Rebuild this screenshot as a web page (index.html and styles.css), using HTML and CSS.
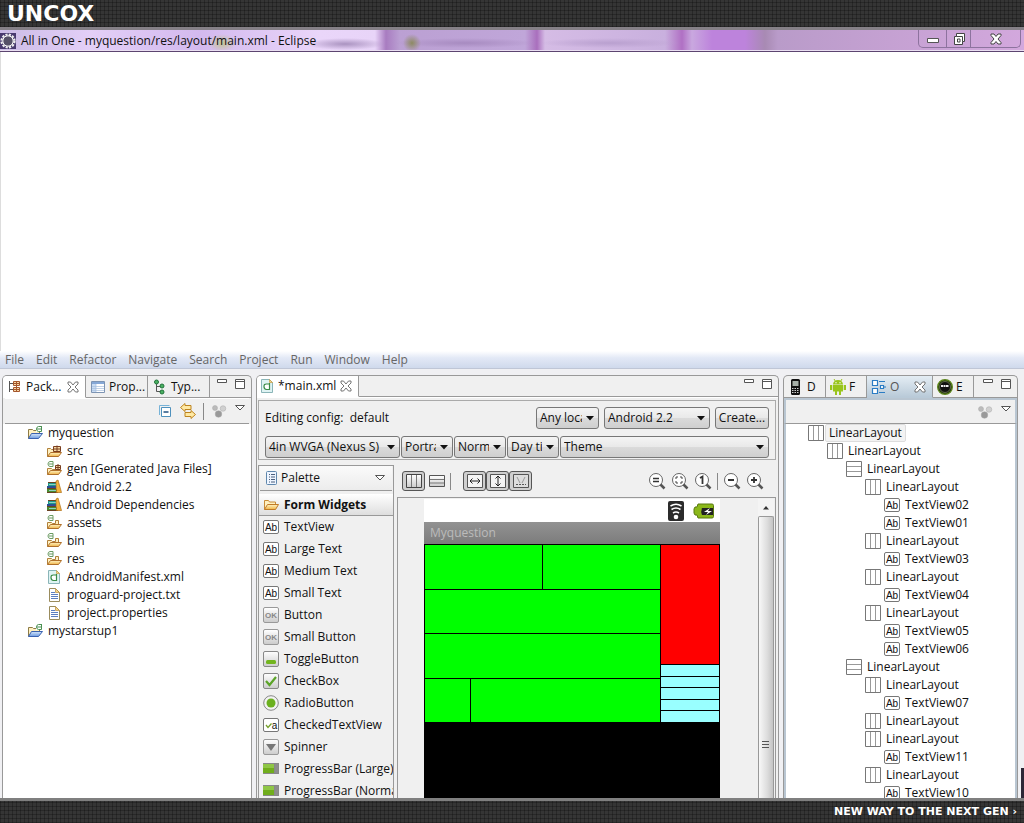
FILE: index.html
```html
<!DOCTYPE html>
<html lang="en">
<head>
    <meta charset="UTF-8">
    <meta name="viewport" content="width=device-width, initial-scale=1.0">
    <title>All in One - Eclipse</title>
    <link rel="stylesheet" href="styles.css">
</head>
<body>
    <!-- icon sprite -->
    <svg class="sprite" aria-hidden="true">
        <defs>
            <linearGradient id="gold" x1="0" y1="0" x2="0" y2="1"><stop offset="0" stop-color="#fff3c4"/><stop offset="1" stop-color="#f0b548"/></linearGradient>
            <linearGradient id="blue" x1="0" y1="0" x2="0" y2="1"><stop offset="0" stop-color="#d5e6fb"/><stop offset="1" stop-color="#6d9be0"/></linearGradient>
            <linearGradient id="grey" x1="0" y1="0" x2="0" y2="1"><stop offset="0" stop-color="#fff"/><stop offset="1" stop-color="#ccc"/></linearGradient>
        </defs>
        <symbol id="project" viewBox="0 0 16 16">
            <path d="M1.500 13.500v-9h4l1 1h6v4" fill="#fff0c0" stroke="#8d7b45"/>
            <path d="M1.500 13.500l3-5h11l-4 5z" fill="url(#blue)" stroke="#3a62b0"/>
            <path d="M9 1h6v6h-6z" fill="#fff"/><path d="M14.500 1v5.500h-3q-2-.3-2-2.500t2-2.500h3M10 4h4" fill="none" stroke="#4a9152"/>
        </symbol>
        <symbol id="folder" viewBox="0 0 16 16">
            <path d="M1.500 13.500v-6h4l1 1h3v-3h3v4" fill="#fff0c0" stroke="#b0803a"/>
            <path d="M1.500 13.500l3-4h11l-3 4z" fill="url(#gold)" stroke="#b0702a"/>
            <path d="M7 .5v5h-3q-2-.3-2-2.500t2-2.500zM3 3h4" fill="#fff" stroke="#6a9a62"/>
        </symbol>
        <symbol id="src" viewBox="0 0 16 16">
            <path d="M1.500 13.500v-8h3l1 1h4v3" fill="#fff0c0" stroke="#b0803a"/>
            <path d="M1.500 13.500l3-4h11l-3 4z" fill="url(#gold)" stroke="#b0702a"/>
            <path d="M7.500 3.500h7v5h-7zM11 2.500v6M7 6h8" fill="#f5d9a5" stroke="#7b3f20"/>
        </symbol>
        <symbol id="gen" viewBox="0 0 16 16">
            <path d="M1.500 13.500v-6h4l1 1h3v2" fill="#fff0c0" stroke="#b0803a"/>
            <path d="M1.500 13.500l3-4h11l-3 4z" fill="url(#gold)" stroke="#b0702a"/>
            <path d="M9.500 4.500h5v4h-5zM12 3v6M9 6.500h6" fill="#f5d9a5" stroke="#7b3f20"/>
            <path d="M7 .5v5h-3q-2-.3-2-2.500t2-2.500zM3 3h4" fill="#fff" stroke="#6a9a62"/>
        </symbol>
        <symbol id="books" viewBox="0 0 16 16">
            <path d="M2 4h8v3h-8z" fill="#1d9a8c"/><path d="M1 7h9v3h-9z" fill="#2c4f95"/><path d="M1 10h10v3h-10z" fill="#4a8a2d"/>
            <path d="M3 5.500h7M3 11.500h7" stroke="#8fd0c4"/><path d="M1 13.500h11M1 9.500h9M2 3.500h8" stroke="#6b4222"/>
            <path d="M10 2l2-1 3.500 12.500h-5z" fill="#f2b23c" stroke="#ad6d16" stroke-width=".7"/>
        </symbol>
        <symbol id="afile" viewBox="0 0 16 16">
            <path d="M2.500 1.500h8l3 3v10h-11z" fill="#dff3f3" stroke="#8ab5b8"/><path d="M10.500 1.500v3h3z" fill="#f5d78b" stroke="#c49a3f" stroke-width=".7"/>
            <path d="M10.500 5v6.500h-3q-2.500-.3-2.500-3t2.500-2.500h3" fill="#fff" stroke="#3a8b46" stroke-width="1.200"/>
        </symbol>
        <symbol id="txt" viewBox="0 0 16 16">
            <path d="M3.500 1.500h6l4 4v9h-10z" fill="#fff" stroke="#9a8c5d"/><path d="M9.500 1.500v4h4z" fill="#f5d78b" stroke="#b48a3f" stroke-width=".7"/>
            <path d="M5 5.500h4M5 7.500h7M5 9.500h7M5 11.500h7" stroke="#5d7fc0"/>
        </symbol>
        <symbol id="pkg" viewBox="0 0 16 16">
            <path d="M2.500 2v11M3 4.500h3M3 10.500h3" stroke="#555" fill="none"/>
            <path d="M6.500 2.500h6v4h-6zM6.500 8.500h6v4h-6zM9.500 2v11M6 4.500h7M6 10.500h7" fill="#f6d9a8" stroke="#a5562c"/>
        </symbol>
        <symbol id="props" viewBox="0 0 16 16">
            <path d="M1.500 2.500h13v11h-13z" fill="#fff" stroke="#7d94b3"/><path d="M2 3h12v2h-12z" fill="#86a8d6"/><path d="M2 5h4v8h-4z" fill="#c9dcf3"/>
            <path d="M2 7.500h12M2 9.500h12M2 11.500h12M6 5v8" stroke="#a6bfdd" stroke-width=".7"/>
        </symbol>
        <symbol id="types" viewBox="0 0 16 16">
            <path d="M4.500 3v9.500h5M5 7.500h5" fill="none" stroke="#555"/><g fill="#4ab061" stroke="#20733a"><circle cx="4.500" cy="3" r="2"/><circle cx="10" cy="7" r="2"/><circle cx="10" cy="13" r="2"/></g>
        </symbol>
        <symbol id="close" viewBox="0 0 12 12">
            <path d="M1 1h2.500l2.500 3 2.500-3h2.500v2l-3 3 3 3v2h-2.500l-2.500-3-2.500 3h-2.500v-2l3-3-3-3z" fill="#fff" stroke="#666" stroke-width=".9"/>
        </symbol>
        <symbol id="collapse" viewBox="0 0 16 16"><path d="M2.500 12v-9.500h10" fill="none" stroke="#77b3d8"/><path d="M4.500 4.500h9v9h-9z" fill="#fff" stroke="#4e91bd"/><path d="M6.500 9h5" stroke="#205080" stroke-width="1.500"/></symbol>
        <symbol id="link" viewBox="0 0 16 16"><path d="M5 .5v2h6v4h-6v2l-4.500-4zM11 7.500v2h-6v4h6v2l4.500-4z" fill="#ffe9a3" stroke="#bd8420"/></symbol>
        <symbol id="focus" viewBox="0 0 16 16"><g stroke="#aaa" stroke-width=".5"><circle cx="4" cy="5" r="2.500" fill="#bbb"/><circle cx="12" cy="5.500" r="2.800" fill="#d0d0d0"/><circle cx="7.500" cy="11" r="3.300" fill="#999"/></g></symbol>
        <symbol id="tri" viewBox="0 0 12 12"><path d="M1.500 3.500h9l-4.500 4.500z" fill="#fff" stroke="#555"/></symbol>
        <symbol id="min" viewBox="0 0 12 12"><path d="M1.500 1.500h9v3h-9z" fill="#fff" stroke="#555"/></symbol>
        <symbol id="max" viewBox="0 0 12 12"><path d="M1.500 1.500h9v9h-9zM1.500 3.500h9" fill="#fff" stroke="#555"/></symbol>
        <symbol id="cols" viewBox="0 0 16 16"><path d="M.5.5h15v15h-15z" fill="#fff" stroke="#777"/><path d="M5.500 1v14M10.500 1v14" stroke="#999"/></symbol>
        <symbol id="rows" viewBox="0 0 16 16"><path d="M.5.5h15v15h-15z" fill="#fff" stroke="#777"/><path d="M1 5.500h14M1 10.500h14" stroke="#999"/></symbol>
        <symbol id="tcols" viewBox="0 0 16 14"><path d="M.5.5h15v13h-15z" fill="url(#grey)" stroke="#444"/><path d="M5.500 1v12M10.500 1v12" stroke="#777"/></symbol>
        <symbol id="trows" viewBox="0 0 16 14"><path d="M.5 1.500h15v11h-15z" fill="url(#grey)" stroke="#555"/><path d="M1 5.500h14M1 9h14" stroke="#777"/></symbol>
        <symbol id="toggle" viewBox="0 0 16 16"><rect x=".5" y=".5" width="15" height="15" rx="1.500" fill="url(#grey)" stroke="#888"/><rect x="3" y="9" width="10" height="4" rx="1.500" fill="#72b51e"/></symbol>
        <symbol id="check" viewBox="0 0 16 16"><rect x=".5" y=".5" width="15" height="15" rx="1.500" fill="url(#grey)" stroke="#888"/><path d="M3 8l3.500 4 6.500-8" fill="none" stroke="#5ba428" stroke-width="2.200"/></symbol>
        <symbol id="radio" viewBox="0 0 16 16"><circle cx="8" cy="8" r="7.300" fill="#f2f2f2" stroke="#888"/><circle cx="8" cy="8" r="4.500" fill="#6bb01f"/></symbol>
        <symbol id="spin" viewBox="0 0 16 16"><rect x=".5" y=".5" width="15" height="15" rx="1.500" fill="url(#grey)" stroke="#999"/><path d="M3 5h10l-5 7z" fill="#777"/></symbol>
        <symbol id="bar" viewBox="0 0 16 16"><path d="M0 2h16v11h-16z" fill="#888"/><path d="M0 3h11v9h-11z" fill="#70ad1c"/><path d="M0 3h11v4h-11z" fill="#8fc646"/><path d="M12 3h3v9h-3z" fill="#8d8d8d"/></symbol>
        <symbol id="palette" viewBox="0 0 16 16"><rect x="3.500" y="1.500" width="10" height="13" rx="1" fill="#eef5ff" stroke="#5f87ad"/><path d="M6 4.500h1M8 4.500h4M6 7h1M8 7h4M6 9.500h1M8 9.500h4M6 12h1M8 12h4" stroke="#4b5e7c"/></symbol>
        <symbol id="open" viewBox="0 0 16 16"><path d="M1.500 12.500v-9h4l1 1.500h6v3" fill="#fff0c0" stroke="#c88b38"/><path d="M1.500 12.500l3-5h11l-3 5z" fill="url(#gold)" stroke="#c07a28"/></symbol>
        <symbol id="phone" viewBox="0 0 16 16"><rect x="3" y="0" width="9" height="16" rx="1.500" fill="#111"/><path d="M4.500 2h6v5h-6z" fill="#a7b0a8"/><path d="M4 9.500h7M4 11.500h7M4 13.500h7" stroke="#ccc" stroke-dasharray="1.500 1"/></symbol>
        <symbol id="droid" viewBox="0 0 16 16"><path d="M3 5.500a5 4.500 0 0 1 10 0zM3 6h10v6.500h-10zM0 6h2.300v5h-2.300zM13.700 6h2.300v5h-2.300zM5 12h2v4h-2zM9 12h2v4h-2z" fill="#99c51d"/><path d="M4 0l1.500 2.500M12 0l-1.500 2.500" stroke="#99c51d"/><circle cx="6" cy="3.700" r=".7" fill="#fff"/><circle cx="10" cy="3.700" r=".7" fill="#fff"/></symbol>
        <symbol id="outline" viewBox="0 0 16 16"><path d="M1.500 1.500h5v5h-5zM1.500 9.500h5v5h-5zM9.500 6.500h3v3h-3z" fill="#fff" stroke="#2b7cc4" stroke-width="1.200"/><path d="M8 2.500h6M13 8h2M8 13.500h6" stroke="#2b7cc4" stroke-width="1.200"/></symbol>
        <symbol id="emu" viewBox="0 0 16 16"><circle cx="8" cy="8" r="7.300" fill="#202714" stroke="#5c861c" stroke-width="1.400"/><circle cx="8" cy="8" r="5.500" fill="#111" stroke="#5c6b44"/><path d="M4 7h8" stroke="#eee" stroke-width="2" stroke-dasharray="2 .5"/></symbol>
        <symbol id="eclipse" viewBox="0 0 16 16"><path d="M0 0h16v16h-16z" fill="#48396e"/><circle cx="8" cy="8" r="6.500" fill="none" stroke="#eee" stroke-width="2.200" stroke-dasharray="2.200 1.200"/><circle cx="8" cy="8" r="5.200" fill="#555067" stroke="#fff"/></symbol>
        <symbol id="lens" viewBox="0 0 18 18"><circle cx="8" cy="8" r="6.500" fill="#fff" stroke="#666"/><path d="M12.500 12.500l4 4" stroke="#555" stroke-width="2.500"/></symbol>
    </svg>

    <header class="site-header"><span class="logo">UNCOX</span></header>

    <div class="title-bar">
        <svg class="icon"><use href="#eclipse"/></svg>
        <span class="window-title">All in One - myquestion/res/layout/main.xml - Eclipse</span>
        <div class="window-buttons">
            <button aria-label="Minimize"><svg width="14" height="12"><path d="M1.500 5.500h11v4h-11z" fill="#fff" stroke="#555"/></svg></button>
            <button aria-label="Restore"><svg width="14" height="14"><path d="M4.500 1.500h8v8h-2v3h-8v-8h2z" fill="#fff" stroke="#444"/><path d="M4.500 4.500h6v5M5.500 7h2.500v3h-2.500z" fill="none" stroke="#444"/></svg></button>
            <button aria-label="Close" class="close-window"><svg width="14" height="12"><path d="M2 1h3l2 2.500 2-2.500h3v1.500l-3 3.500 3 3.500v1.500h-3l-2-2.500-2 2.500h-3v-1.500l3-3.500-3-3.500z" fill="#fff" stroke="#444"/></svg></button>
        </div>
    </div>

    <div class="blank-area"></div>

    <nav class="menu-bar">
        <a href="#">File</a><a href="#">Edit</a><a href="#">Refactor</a><a href="#">Navigate</a><a href="#">Search</a><a href="#">Project</a><a href="#">Run</a><a href="#">Window</a><a href="#">Help</a>
    </nav>

    <main class="workspace">
        <section class="panel">
            <div class="tabs">
                <button class="tab tab-wide active"><svg class="icon"><use href="#pkg"/></svg>Pack...<svg class="close"><use href="#close"/></svg></button>
                <button class="tab tab-mid"><svg class="icon"><use href="#props"/></svg>Prop...</button>
                <button class="tab tab-mid"><svg class="icon"><use href="#types"/></svg>Typ...</button>
                <span class="tab-tools"><svg class="small"><use href="#min"/></svg><svg class="small"><use href="#max"/></svg></span>
            </div>
            <div class="panel-toolbar">
                <svg class="icon"><use href="#collapse"/></svg>
                <svg class="icon"><use href="#link"/></svg>
                <i class="separator"></i>
                <svg class="icon"><use href="#focus"/></svg>
                <svg class="small"><use href="#tri"/></svg>
            </div>
            <ul class="tree files" id="files"></ul>
        </section>

        <section class="panel editor">
            <div class="tabs">
                <button class="tab tab-editor active"><svg class="icon"><use href="#afile"/></svg>*main.xml<svg class="close"><use href="#close"/></svg></button>
                <span class="tab-tools"><svg class="small"><use href="#min"/></svg><svg class="small"><use href="#max"/></svg></span>
            </div>
            <div class="config">
                <div class="config-row">
                    <span class="config-name">Editing config:&nbsp; default</span>
                    <select aria-label="Locale" class="w-locale"><option>Any locale</option></select>
                    <select aria-label="Target" class="w-target"><option>Android 2.2</option></select>
                    <button class="create">Create...</button>
                </div>
                <div class="config-row tight">
                    <select aria-label="Device" class="w-device"><option>4in WVGA (Nexus S)</option></select>
                    <select aria-label="Orientation" class="w-short"><option>Portrait</option></select>
                    <select aria-label="Dock mode" class="w-short"><option>Normal</option></select>
                    <select aria-label="Night mode" class="w-short"><option>Day time</option></select>
                    <select aria-label="Theme" class="w-theme"><option>Theme</option></select>
                </div>
            </div>
            <div class="designer">
                <aside class="palette">
                    <div class="palette-title"><svg class="icon"><use href="#palette"/></svg>Palette<svg class="small"><use href="#tri"/></svg></div>
                    <div class="palette-group"><svg class="icon"><use href="#open"/></svg>Form Widgets</div>
                    <ul id="widgets"></ul>
                </aside>
                <div class="stage">
                    <div class="stage-toolbar">
                        <button class="tool pressed" aria-label="Horizontal"><svg width="16" height="14"><use href="#tcols"/></svg></button>
                        <button class="tool flat" aria-label="Vertical"><svg width="16" height="14"><use href="#trows"/></svg></button>
                        <i class="separator"></i>
                        <button class="tool pressed push" aria-label="Toggle width"><svg width="16" height="14"><path d="M.5.5h15v13h-15z" fill="#f4f4f4" stroke="#555"/><path d="M3 7h10M5.500 4.500l-2.500 2.500 2.500 2.500M10.500 4.500l2.500 2.500-2.500 2.500" fill="none" stroke="#222"/></svg></button>
                        <button class="tool pressed" aria-label="Toggle height"><svg width="16" height="14"><path d="M.5.5h15v13h-15z" fill="#f4f4f4" stroke="#555"/><path d="M8 2v10M5.500 4.500l2.500-2.500 2.500 2.500M5.500 9.500l2.500 2.500 2.500-2.500" fill="none" stroke="#222"/></svg></button>
                        <button class="tool pressed" aria-label="Show margins"><svg width="16" height="14"><path d="M.5.5h15v13h-15z" fill="#ddd" stroke="#555"/><path d="M4 3l3 6M12 3l-3 6" stroke="#999"/><path d="M3 10.500h10" stroke="#555" stroke-dasharray="2 1"/></svg></button>
                        <div class="zoom">
                            <button aria-label="Emulate size"><svg width="18" height="18"><use href="#lens"/><path d="M5 6.500h6M5 9.500h6" stroke="#333" stroke-width="1.500"/></svg></button>
                            <button aria-label="Zoom to fit"><svg width="18" height="18"><use href="#lens"/><path d="M5 7v-2h2M9 5h2v2M11 9v2h-2M7 11h-2v-2" fill="none" stroke="#444"/></svg></button>
                            <button aria-label="Actual size"><svg width="18" height="18"><use href="#lens"/><path d="M6 6l2.500-1.500v7.500" fill="none" stroke="#333" stroke-width="1.800"/></svg></button>
                            <i class="separator"></i>
                            <button aria-label="Zoom out"><svg width="18" height="18"><use href="#lens"/><path d="M5 8h6" stroke="#333" stroke-width="1.800"/></svg></button>
                            <button aria-label="Zoom in"><svg width="18" height="18"><use href="#lens"/><path d="M5 8h6M8 5v6" stroke="#333" stroke-width="1.800"/></svg></button>
                        </div>
                    </div>
                    <div class="canvas">
                        <div class="device">
                            <div class="status">
                                <svg width="16" height="20"><rect width="16" height="20" rx="2" fill="#2b2b2b"/><path d="M2.500 5q5.500-3.500 11 0M3.500 8.500q4.500-3 9 0M5 12q3-2 6 0" fill="none" stroke="#fff" stroke-width="1.600"/><circle cx="8" cy="16" r="2.300" fill="#fff"/></svg>
                                <svg width="21" height="16"><path d="M5 1h14q1.500 0 1.500 1.500v11q0 1.500-1.500 1.500h-14l-1-3h-2l-1-2v-4l1-2h2z" fill="#8bb81a" stroke="#58780f"/><path d="M9 5h11v7h-11q-1.500-3.500 0-7z" fill="#222"/><path d="M17 5l-6 4h4l-2 3 6-4h-4z" fill="#fff"/></svg>
                            </div>
                            <div class="app-title">Myquestion</div>
                            <div class="app">
                                <div class="greens">
                                    <div class="line"><b></b><b></b></div>
                                    <div class="line"><b></b></div>
                                    <div class="line"><b></b></div>
                                    <div class="line narrow-first"><b></b><b></b></div>
                                </div>
                                <div class="side"><b class="red"></b><b></b><b></b><b></b><b></b><b></b></div>
                            </div>
                        </div>
                        <div class="scrollbar">
                            <svg width="16" height="17"><path d="M5 10.500l3-3.500 3 3.500z" fill="#333"/></svg>
                            <div class="thumb"><svg width="8" height="8"><path d="M0 .5h7M0 3.500h7M0 6.500h7" stroke="#555"/></svg></div>
                        </div>
                    </div>
                </div>
            </div>
        </section>

        <section class="panel outline">
            <div class="tabs">
                <button class="tab tab-small"><svg class="icon"><use href="#phone"/></svg>D</button>
                <button class="tab tab-small"><svg class="icon"><use href="#droid"/></svg>F</button>
                <button class="tab tab-focus active"><svg class="icon"><use href="#outline"/></svg>O<svg class="close"><use href="#close"/></svg></button>
                <button class="tab tab-small"><svg class="icon"><use href="#emu"/></svg>E</button>
                <span class="tab-tools"><svg class="small"><use href="#min"/></svg><svg class="small"><use href="#max"/></svg></span>
            </div>
            <div class="panel-toolbar">
                <svg class="icon"><use href="#focus"/></svg>
                <svg class="small"><use href="#tri"/></svg>
            </div>
            <ul class="tree layout-tree" id="layoutTree"></ul>
        </section>
        <i class="edge"></i>
    </main>

    <footer class="site-footer">NEW WAY TO THE NEXT GEN ›</footer>

    <script src="script.js"></script>
</body>
</html>
```

FILE: styles.css
```css
* {
    box-sizing: border-box;
}
body {
    margin: 0;
    height: 100vh;
    display: flex;
    flex-direction: column;
    overflow: hidden;
    background: #fff;
    color: #111;
    font-family: "Open Sans", "Noto Sans", sans-serif;
    font-size: 12px;
    line-height: 18px;
}
button, select {
    font: inherit;
    color: inherit;
    margin: 0;
}
button {
    padding: 0;
    border: none;
    background: none;
}
ul {
    list-style: none;
    margin: 0;
    padding: 0;
}
svg {
    display: block;
    flex-shrink: 0;
}
.sprite {
    position: absolute;
    width: 0;
    height: 0;
}
.icon {
    width: 16px;
    height: 16px;
}
.small, .close {
    width: 12px;
    height: 12px;
}
/* icons made of letters */
.badge {
    display: flex;
    flex-shrink: 0;
    align-items: center;
    justify-content: center;
    width: 16px;
    height: 14px;
    border: 1px solid #777;
    border-radius: 2px;
    background: #fff;
    font: 10px "Liberation Sans", sans-serif;
}
.badge-ok {
    height: 16px;
    border-color: #999;
    background: linear-gradient(#fff, #ccc);
    color: #888;
    font-size: 8px;
    font-weight: bold;
}

/* dark woven strips */
.site-header, .site-footer {
    flex-shrink: 0;
    display: flex;
    align-items: center;
    color: #fff;
    font-family: "DejaVu Sans", sans-serif;
    font-weight: bold;
    background-color: #353535;
    background-image:
        repeating-linear-gradient(90deg, rgba(0, 0, 0, 0.25) 0 1px, transparent 1px 4px),
        repeating-linear-gradient(0deg, rgba(0, 0, 0, 0.25) 0 1px, transparent 1px 4px);
}
.site-header {
    height: 30px;
    padding-left: 7px;
    border-bottom: 3px solid #858087;
}
.logo {
    font-size: 22px;
}
.site-footer {
    height: 25px;
    justify-content: flex-end;
    padding-right: 7px;
    font-size: 11px;
    border-top: 3px solid #7f7f7f;
}

.title-bar {
    flex-shrink: 0;
    display: flex;
    height: 22px;
    align-items: center;
    border-bottom: 1px solid #5c4570;
    background:
        linear-gradient(0deg, #eadff2 0 1px, transparent 1px),
        radial-gradient(ellipse 9px 9px at 412px 13px, #8d8a62, transparent),
        radial-gradient(ellipse 14px 9px at 222px 13px, #c3c493, transparent),
        radial-gradient(ellipse 40px 6px at 345px 14px, #aa93c0, transparent),
        radial-gradient(ellipse 70px 5px at 465px 13px, #a78bc0, transparent),
        radial-gradient(ellipse 70px 5px at 610px 13px, #b9a0cf, transparent),
        linear-gradient(90deg, #cbbbe6 0, #e3cff7 90px, #d3b9ee 200px, #ead6fa 320px, #e8d4f8 375px, #a87cc0 386px, #bba0d3 400px, #c0a6d9 525px, #a96fbd 537px, #d5bce5 545px, #c9b0de 665px, #b070c4 682px, #c9a8df 692px, #bd83dc 712px, #bd83dc 745px, #a88ab3 765px, #b99bc9 778px, #d3a8dd 100%);
}
.title-bar > .icon {
    margin-right: 5px;
}
.window-buttons {
    margin: 0 3px 2px auto;
    display: flex;
    align-self: flex-start;
    border: 1px solid #8d739e;
    border-top: none;
    border-radius: 0 0 5px 5px;
}
.window-buttons button {
    display: flex;
    align-items: center;
    justify-content: center;
    width: 28px;
    height: 17px;
    border-right: 1px solid #8d739e;
}
.window-buttons button:nth-child(2) {
    width: 24px;
}
.window-buttons .close-window {
    width: 49px;
    border-right: none;
}
.blank-area {
    flex: 0 0 299px;
    border-left: 1px solid #ddd;
}
.menu-bar {
    flex-shrink: 0;
    display: flex;
    gap: 12px;
    height: 18px;
    padding-left: 5px;
    background: linear-gradient(#fff, #e3e9f6 40%, #cfd9ec);
    border-bottom: 1px solid #bfc6d6;
}
.menu-bar a {
    color: #666;
    text-decoration: none;
}

.workspace {
    flex: 1;
    min-height: 0;
    position: relative;
    display: grid;
    grid-template-columns: 250px minmax(0, 1fr) 235px;
    grid-template-rows: minmax(0, 1fr);
    gap: 4px;
    padding: 6px 6px 0 2px;
    background: #f0f0f3;
}
.panel {
    display: flex;
    flex-direction: column;
    min-height: 0;
    overflow: hidden;
    border: 1px solid #999;
    border-bottom: none;
    border-radius: 5px 5px 0 0;
    background: #f0f0f0;
}
.tabs {
    flex-shrink: 0;
    display: flex;
    height: 22px;
}
.tab {
    display: flex;
    align-items: center;
    flex-shrink: 0;
    gap: 3px;
    padding: 0 6px 0 4px;
    border-right: 1px solid #999;
    border-bottom: 1px solid #999;
    white-space: nowrap;
}
.tab.active {
    border-bottom-color: #fff;
    background: #fff;
}
.tab .close {
    margin-left: auto;
}
.tab-wide {
    width: 83px;
}
.tab-mid {
    width: 62px;
}
.tab-editor {
    width: 102px;
    padding-left: 2px;
}
.tab-small {
    width: 41px;
}
.tab-small:first-child {
    width: 42px;
}
.tab-focus {
    width: 66px;
}
.tab-focus.active {
    color: #555;
    border-bottom-color: #b9cad8;
    background: linear-gradient(#e4edf4, #b9cad8);
}
.tab-tools {
    flex: 1;
    display: flex;
    justify-content: flex-end;
    gap: 6px;
    padding: 2px 5px 0 0;
    border-bottom: 1px solid #999;
}
.panel-toolbar {
    flex-shrink: 0;
    display: flex;
    justify-content: flex-end;
    align-items: center;
    gap: 7px;
    height: 26px;
    margin: 0 2px;
    padding-right: 3px;
    border-bottom: 1px solid #999;
    background: #f0f0f0;
}
.panel-toolbar .small {
    align-self: flex-start;
    margin-top: 3px;
}
.panel:first-child .panel-toolbar {
    border-top: 1px solid #fff;
}
.separator {
    width: 1px;
    height: 17px;
    background: #888;
}

.tree {
    flex: 1;
    min-height: 0;
    overflow: hidden;
    background: #fff;
}
.tree li {
    display: flex;
    align-items: center;
    gap: 5px;
    height: 18px;
}
.files {
    padding-left: 24px;
}
.level-1 {
    padding-left: 19px;
}
.level-2 {
    padding-left: 38px;
}
.level-3 {
    padding-left: 57px;
}
.level-4 {
    padding-left: 76px;
}

.editor .tabs {
    border-bottom: 1px solid #fff;
}
.config {
    flex-shrink: 0;
    display: flex;
    flex-direction: column;
    gap: 7px;
    height: 60px;
    margin: 2px 2px 0 1px;
    padding: 6px 6px 0 6px;
    border: 1px solid #aaa;
}
.config-row {
    display: flex;
    gap: 5px;
    align-items: center;
}
.config-row.tight {
    gap: 1px;
}
.config-name {
    flex: 1;
}
select, .create {
    height: 22px;
    border: 1px solid #777;
    border-radius: 3px;
    background: linear-gradient(#f4f4f4, #e9e9e9 48%, #dadada 52%, #cfcfcf);
}
select {
    appearance: none;
    padding: 0 16px 0 3px;
    background:
        url("data:image/svg+xml,%3Csvg xmlns='http://www.w3.org/2000/svg' width='8' height='5'%3E%3Cpath d='M0 0h8l-4 4.500z' fill='%23111'/%3E%3C/svg%3E") no-repeat right 4px center,
        linear-gradient(#f4f4f4, #e9e9e9 48%, #dadada 52%, #cfcfcf);
}
.create {
    width: 54px;
}
.w-locale {
    width: 63px;
}
.w-target {
    width: 106px;
}
.w-device {
    width: 135px;
}
.w-short {
    width: 52px;
}
.w-theme {
    flex: 1;
}

.designer {
    flex: 1;
    min-height: 0;
    display: flex;
    gap: 3px;
    margin: 5px 2px 0 1px;
}
.palette {
    flex: 0 0 136px;
    overflow: hidden;
    border: 1px solid #999;
    border-bottom: none;
}
.palette-title, .palette-group, .palette li {
    display: flex;
    align-items: center;
    gap: 5px;
    padding-left: 4px;
    height: 22px;
    white-space: nowrap;
}
.palette-title {
    gap: 2px;
    padding: 0 6px 0 3px;
    height: 25px;
    margin: 0 1px 3px;
    border-bottom: 1px solid #999;
    background: linear-gradient(#fafafa, #ececec);
}
.palette-title .small {
    margin-left: auto;
}
.palette-group {
    font-weight: bold;
    border-bottom: 1px solid #999;
    background: linear-gradient(#fff, #dedede);
}
.stage {
    flex: 1;
    min-width: 0;
    display: flex;
    flex-direction: column;
}
.stage-toolbar {
    flex-shrink: 0;
    display: flex;
    align-items: center;
    height: 32px;
    padding-left: 5px;
}
.tool {
    display: flex;
    align-items: center;
    justify-content: center;
    width: 23px;
    height: 20px;
}
.tool.pressed {
    border: 1px solid #555;
    border-radius: 3px;
    background: #cfcfcf;
}
.tool.flat + .separator {
    margin-left: 2px;
}
.tool.push {
    margin-left: 12px;
}
.zoom {
    display: flex;
    align-items: center;
    gap: 5px;
    margin-left: auto;
    padding-right: 12px;
}
.canvas {
    flex: 1;
    min-height: 0;
    display: flex;
    justify-content: space-between;
    padding: 1px 1px 0 26px;
    border: 1px solid #999;
    border-bottom: none;
}
.device {
    width: 296px;
    background: #000;
    overflow: hidden;
}
.status {
    display: flex;
    align-items: center;
    justify-content: flex-end;
    gap: 9px;
    height: 23px;
    padding-right: 6px;
    background: #fff;
}
.app-title {
    height: 22px;
    padding-left: 6px;
    line-height: 22px;
    color: #bbb;
    background: linear-gradient(#929292, #7c7c7c);
}
.app {
    display: flex;
    gap: 1px;
    height: 179px;
    padding: 1px;
}
.greens {
    flex: 1;
    display: flex;
    flex-direction: column;
    gap: 1px;
}
.line {
    flex: 1;
    display: flex;
    gap: 1px;
}
.line b {
    flex: 1;
    background: #0f0;
}
.narrow-first b:first-child {
    flex: 0 0 19%;
}
.side {
    flex: 0 0 58px;
    display: grid;
    gap: 1px;
    grid-template-rows: 119px repeat(5, 1fr);
}
.side b {
    background: #9ff;
}
.side .red {
    background: #f00;
}
.scrollbar {
    width: 16px;
    display: flex;
    flex-direction: column;
    background: #f4f4f4;
}
.thumb {
    flex: 1;
    display: flex;
    align-items: flex-end;
    justify-content: center;
    padding-bottom: 49px;
    border: 1px solid #999;
    border-bottom: none;
    border-radius: 2px 2px 0 0;
    background: linear-gradient(90deg, #f8f8f8, #dcdcdc 60%, #c4c4c4);
}

.outline .panel-toolbar, .outline .tree {
    margin: 0;
    border-left: 2px solid #b9c6d2;
    border-right: 2px solid #b9c6d2;
}
.outline .panel-toolbar {
    border-top: 2px solid #b9c6d2;
}
.layout-tree {
    padding-left: 22px;
}
.selected span {
    margin-left: -4px;
    padding: 0 3px;
    line-height: 16px;
    border: 1px solid #ddd;
    border-radius: 2px;
    background: #f3f3f3;
}
.edge {
    position: absolute;
    right: 0;
    bottom: 0;
    width: 3px;
    height: 30px;
    background: #2c2736;
}
```

FILE: script.js
```js
const files = [
    [0, "project", "myquestion"],
    [1, "src", "src"],
    [1, "gen", "gen [Generated Java Files]"],
    [1, "books", "Android 2.2"],
    [1, "books", "Android Dependencies"],
    [1, "folder", "assets"],
    [1, "folder", "bin"],
    [1, "folder", "res"],
    [1, "afile", "AndroidManifest.xml"],
    [1, "txt", "proguard-project.txt"],
    [1, "txt", "project.properties"],
    [0, "project", "mystarstup1"]
];

const widgets = [
    [0, "ab", "TextView"],
    [0, "ab", "Large Text"],
    [0, "ab", "Medium Text"],
    [0, "ab", "Small Text"],
    [0, "ok", "Button"],
    [0, "ok", "Small Button"],
    [0, "toggle", "ToggleButton"],
    [0, "check", "CheckBox"],
    [0, "radio", "RadioButton"],
    [0, "checked", "CheckedTextView"],
    [0, "spin", "Spinner"],
    [0, "bar", "ProgressBar (Large)"],
    [0, "bar", "ProgressBar (Normal)"]
];

const layoutTree = [
    [0, "cols", "LinearLayout", "selected"],
    [1, "cols", "LinearLayout"],
    [2, "rows", "LinearLayout"],
    [3, "cols", "LinearLayout"],
    [4, "ab", "TextView02"],
    [4, "ab", "TextView01"],
    [3, "cols", "LinearLayout"],
    [4, "ab", "TextView03"],
    [3, "cols", "LinearLayout"],
    [4, "ab", "TextView04"],
    [3, "cols", "LinearLayout"],
    [4, "ab", "TextView05"],
    [4, "ab", "TextView06"],
    [2, "rows", "LinearLayout"],
    [3, "cols", "LinearLayout"],
    [4, "ab", "TextView07"],
    [3, "cols", "LinearLayout"],
    [3, "cols", "LinearLayout"],
    [4, "ab", "TextView11"],
    [3, "cols", "LinearLayout"],
    [4, "ab", "TextView10"]
];

// icons that contain letters are plain text badges, the rest come from the sprite
const badges = {
    ab: `<i class="badge">Ab</i>`,
    ok: `<i class="badge badge-ok">OK</i>`,
    checked: `<i class="badge"><svg width="7" height="8"><path d="M1 4l2 2.500 3.500-4" fill="none" stroke="#75a02b" stroke-width="1.300"/></svg>a</i>`
};

function fillList(id, rows) {
    document.getElementById(id).innerHTML = rows.map(([level, icon, label, extra]) => `
        <li class="level-${level} ${extra || ""}">
            ${badges[icon] || `<svg class="icon"><use href="#${icon}"/></svg>`}<span>${label}</span>
        </li>`).join("");
}

fillList("files", files);
fillList("widgets", widgets);
fillList("layoutTree", layoutTree);
```
